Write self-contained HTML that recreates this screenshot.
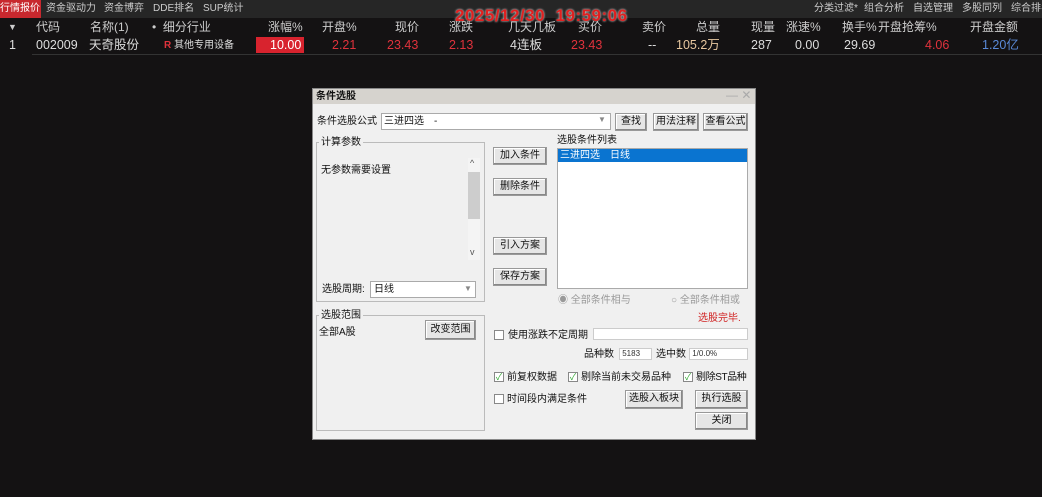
<!DOCTYPE html><html><head><meta charset="utf-8"><style>
*{margin:0;padding:0;box-sizing:border-box}
body{width:1042px;height:497px;background:#141213;position:relative;overflow:hidden;font-family:"Liberation Sans","Noto Sans CJK SC",sans-serif;color:#ddd}
.a{position:absolute;white-space:nowrap}
.t{font-size:10px;top:3px;color:#ccc;line-height:12px}
.h{font-size:12px;top:19px;color:#ccc;line-height:16px}
.r{font-size:12.5px;top:37px;color:#ddd;line-height:17px}
.red{color:#e0323c}
.d{font-size:10px;line-height:13px;color:#111}
.btn{position:absolute;background:#e6e6e6;border:1px solid #999;box-shadow:inset -1px -1px 0 #888,inset 1px 1px 0 #fff;font-size:10px;color:#111;text-align:center;line-height:16px;white-space:nowrap}
.box{position:absolute;background:#fff;border:1px solid #aaa}
.grp{position:absolute;border:1px solid #bbb}
.cb{position:absolute;width:10px;height:10px;border:1px solid #888;background:#fff;font-size:9px;line-height:8px;color:#3a3;text-align:center}
</style></head><body>
<div class="a" style="left:0;top:0;width:1042px;height:18px;background:#262626"></div>
<div class="a" style="left:0;top:0;width:41px;height:18px;background:#c8282e"></div>
<div class="a t" style="left:0;color:#fff">行情报价</div>
<div class="a t" style="left:46px">资金驱动力</div>
<div class="a t" style="left:104px">资金博弈</div>
<div class="a t" style="left:153px">DDE排名</div>
<div class="a t" style="left:203px">SUP统计</div>
<div class="a t" style="left:814px">分类过滤*</div>
<div class="a t" style="left:864px">组合分析</div>
<div class="a t" style="left:913px">自选管理</div>
<div class="a t" style="left:962px">多股同列</div>
<div class="a t" style="left:1011px">综合排名</div>
<div class="a" style="left:455px;top:6px;font-size:17px;line-height:20px;font-weight:bold;color:#e02020;letter-spacing:0.5px;text-shadow:0 0 2px #fff">2025/12/30&nbsp;&nbsp;19:59:06</div>
<div class="a h" style="left:8px;font-size:9px">▼</div>
<div class="a h" style="left:36px">代码</div>
<div class="a h" style="left:90px">名称(1)</div>
<div class="a h" style="left:152px">•&nbsp;&nbsp;细分行业</div>
<div class="a h" style="left:268px">涨幅%</div>
<div class="a h" style="left:322px">开盘%</div>
<div class="a h" style="left:395px">现价</div>
<div class="a h" style="left:449px">涨跌</div>
<div class="a h" style="left:508px">几天几板</div>
<div class="a h" style="left:578px">买价</div>
<div class="a h" style="left:642px">卖价</div>
<div class="a h" style="left:696px">总量</div>
<div class="a h" style="left:751px">现量</div>
<div class="a h" style="left:786px">涨速%</div>
<div class="a h" style="left:842px">换手%</div>
<div class="a h" style="left:878px">开盘抢筹%</div>
<div class="a h" style="left:970px">开盘金额</div>
<div class="a" style="left:32px;top:54px;width:1010px;height:1px;background:#333"></div>
<div class="a r" style="left:9px">1</div>
<div class="a r" style="left:36px">002009</div>
<div class="a r" style="left:89px">天奇股份</div>
<div class="a r" style="left:164px;font-size:10px"><span class="red" style="font-weight:bold">R</span> 其他专用设备</div>
<div class="a" style="left:256px;top:37px;width:48px;height:16px;background:#d8232e"></div>
<div class="a r" style="left:270px;color:#fff">10.00</div>
<div class="a r red" style="left:332px">2.21</div>
<div class="a r red" style="left:387px">23.43</div>
<div class="a r red" style="left:449px">2.13</div>
<div class="a r" style="left:510px">4连板</div>
<div class="a r red" style="left:571px">23.43</div>
<div class="a r" style="left:648px">--</div>
<div class="a r" style="left:676px;color:#e8c8a0">105.2万</div>
<div class="a r" style="left:751px">287</div>
<div class="a r" style="left:795px">0.00</div>
<div class="a r" style="left:844px">29.69</div>
<div class="a r red" style="left:925px">4.06</div>
<div class="a r" style="left:982px;color:#5a8ad8">1.20亿</div>

<div class="a" style="left:312px;top:88px;width:444px;height:352px;background:#f0f0f0;border:1px solid #888"></div>
<div class="a" style="left:313px;top:89px;width:442px;height:15px;background:#d6d3ce"></div>
<div class="a d" style="left:316px;top:90px;font-weight:bold">条件选股</div>
<div class="a" style="left:726px;top:88px;color:#aaa;font-size:12px">— ✕</div>
<div class="a d" style="left:317px;top:115px">条件选股公式</div>
<div class="box" style="left:381px;top:113px;width:230px;height:17px"></div>
<div class="a d" style="left:384px;top:115px">三进四选　-</div>
<div class="a" style="left:598px;top:115px;color:#888;font-size:8px">▼</div>
<div class="btn" style="left:615px;top:113px;width:32px;height:18px">查找</div>
<div class="btn" style="left:653px;top:113px;width:46px;height:18px">用法注释</div>
<div class="btn" style="left:703px;top:113px;width:45px;height:18px">查看公式</div>
<div class="grp" style="left:316px;top:142px;width:169px;height:160px"></div>
<div class="a d" style="left:319px;top:136px;background:#f0f0f0;padding:0 2px">计算参数</div>
<div class="a d" style="left:321px;top:164px">无参数需要设置</div>
<div class="a" style="left:468px;top:158px;width:12px;height:102px;background:#f4f4f4"></div>
<div class="a" style="left:468px;top:172px;width:12px;height:47px;background:#cdcdcd"></div>
<div class="a" style="left:470px;top:158px;font-size:9px;color:#555">^</div>
<div class="a" style="left:470px;top:247px;font-size:9px;color:#555">v</div>
<div class="a d" style="left:322px;top:283px">选股周期:</div>
<div class="box" style="left:370px;top:281px;width:106px;height:17px"></div>
<div class="a d" style="left:374px;top:283px">日线</div>
<div class="a" style="left:464px;top:284px;color:#888;font-size:8px">▼</div>
<div class="btn" style="left:493px;top:147px;width:54px;height:18px">加入条件</div>
<div class="btn" style="left:493px;top:178px;width:54px;height:18px">删除条件</div>
<div class="btn" style="left:493px;top:237px;width:54px;height:18px">引入方案</div>
<div class="btn" style="left:493px;top:268px;width:54px;height:18px">保存方案</div>
<div class="a d" style="left:557px;top:134px">选股条件列表</div>
<div class="box" style="left:557px;top:148px;width:191px;height:141px"></div>
<div class="a" style="left:558px;top:149px;width:189px;height:13px;background:#0a74d0"></div>
<div class="a d" style="left:560px;top:149px;color:#fff">三进四选　日线</div>
<div class="a d" style="left:558px;top:294px;color:#999">◉ 全部条件相与</div>
<div class="a d" style="left:671px;top:294px;color:#999">○ 全部条件相或</div>
<div class="a d" style="left:698px;top:312px;color:#d02020">选股完毕.</div>
<div class="grp" style="left:316px;top:315px;width:169px;height:116px"></div>
<div class="a d" style="left:319px;top:309px;background:#f0f0f0;padding:0 2px">选股范围</div>
<div class="a d" style="left:319px;top:326px">全部A股</div>
<div class="btn" style="left:425px;top:320px;width:51px;height:20px;line-height:18px">改变范围</div>
<div class="cb" style="left:494px;top:330px"></div>
<div class="a d" style="left:508px;top:329px">使用涨跌不定周期</div>
<div class="box" style="left:593px;top:328px;width:155px;height:12px;border-color:#ccc"></div>
<div class="a d" style="left:584px;top:348px">品种数</div>
<div class="box" style="left:619px;top:348px;width:33px;height:12px;border-color:#ccc;font-size:8px;line-height:10px;color:#333">&nbsp;5183</div>
<div class="a d" style="left:656px;top:348px">选中数</div>
<div class="box" style="left:689px;top:348px;width:59px;height:12px;border-color:#ccc;font-size:8px;line-height:10px;color:#333">&nbsp;1/0.0%</div>
<div class="cb" style="left:494px;top:372px">✓</div>
<div class="a d" style="left:507px;top:371px">前复权数据</div>
<div class="cb" style="left:568px;top:372px">✓</div>
<div class="a d" style="left:581px;top:371px">剔除当前未交易品种</div>
<div class="cb" style="left:683px;top:372px">✓</div>
<div class="a d" style="left:696px;top:371px;letter-spacing:-0.4px">剔除ST品种</div>
<div class="cb" style="left:494px;top:394px"></div>
<div class="a d" style="left:507px;top:393px">时间段内满足条件</div>
<div class="btn" style="left:625px;top:390px;width:58px;height:19px">选股入板块</div>
<div class="btn" style="left:695px;top:390px;width:53px;height:19px">执行选股</div>
<div class="btn" style="left:695px;top:412px;width:53px;height:18px">关闭</div>
</body></html>
